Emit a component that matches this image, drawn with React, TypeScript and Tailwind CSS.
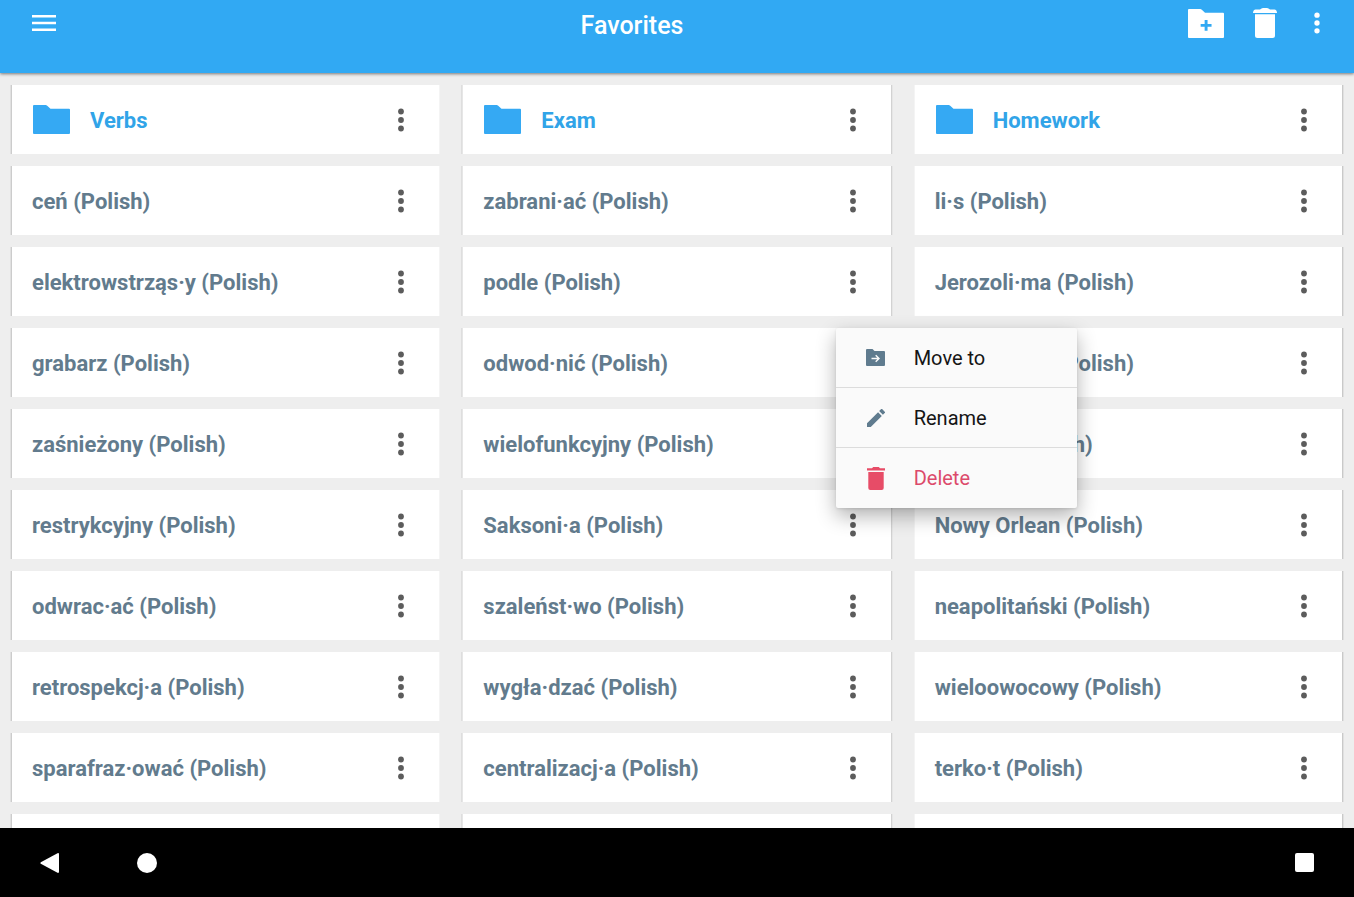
import React from "react";

type Column = { name: string; edge: string; words: string[] };

const columns: Column[] = [
  {
    name: "Verbs",
    edge: "shadow-[-1px_0_0_#cccccc,-2px_0_0_#e0e0e0,1px_0_0_#f4f4f4]",
    words: ["ceń", "elektrowstrząs·y", "grabarz", "zaśnieżony", "restrykcyjny", "odwrac·ać", "retrospekcj·a", "sparafraz·ować"],
  },
  {
    name: "Exam",
    edge: "shadow-[-1px_0_0_#e6e6e6,-2px_0_0_#dedede,1px_0_0_#d2d2d2,2px_0_0_#e6e6e6]",
    words: ["zabrani·ać", "podle", "odwod·nić", "wielofunkcyjny", "Saksoni·a", "szaleńst·wo", "wygła·dzać", "centralizacj·a"],
  },
  {
    name: "Homework",
    edge: "shadow-[-1px_0_0_#f4f4f4,1px_0_0_#c9c9c9,2px_0_0_#e0e0e0]",
    words: ["li·s", "Jerozoli·ma", "Jerozoli·ma", "grabarz", "Nowy Orlean", "neapolitański", "wieloowocowy", "terko·t"],
  },
];

const OPEN_MENU_WORD = "odwod·nić";

function FolderIcon() {
  return (
    <svg width="37" height="29" viewBox="0 0 37 30" preserveAspectRatio="none" fill="currentColor" aria-hidden="true">
      <path d="M1 0H12.500Q13.500 0 14.200 0.700L17.500 4H36Q37 4 37 5V29Q37 30 36 30H1Q0 30 0 29V1Q0 0 1 0Z" />
    </svg>
  );
}

function AddFolderIcon() {
  return (
    <svg width="36" height="29" viewBox="0 0 37 30" preserveAspectRatio="none" fill="currentColor" aria-hidden="true">
      <path
        fillRule="evenodd"
        d="M1 0H12.500Q13.500 0 14.200 0.700L17.500 4H36Q37 4 37 5V29Q37 30 36 30H1Q0 30 0 29V1Q0 0 1 0ZM17.100 11.500V15.600H13V18.400H17.100V22.500H20.100V18.400H24.200V15.600H20.100V11.500Z"
      />
    </svg>
  );
}

function TrashIcon() {
  return (
    <svg width="24" height="30" viewBox="0 0 24 30" fill="currentColor" aria-hidden="true">
      <path d="M7 1.500Q8.500 0 10 0H14Q15.500 0 17 1.500H21.500Q23.500 1.500 24 4.500Q24 5 23.500 5H0.500Q0 5 0 4.500Q0.500 1.500 2.500 1.500ZM2 6.300H22V27.500Q22 30 19.500 30H4.500Q2 30 2 27.500Z" />
    </svg>
  );
}

function SmallTrashIcon() {
  return (
    <svg width="18" height="23" viewBox="0 0 18 23" fill="currentColor" aria-hidden="true">
      <path d="M0 1.300H5L6.200 0H11.800L13 1.300H18V3.600H0ZM1.300 5H16.700V21Q16.700 23 14.700 23H3.300Q1.300 23 1.300 21Z" />
    </svg>
  );
}

function MoveIcon() {
  return (
    <svg width="19" height="17" viewBox="0 0 19 17" fill="currentColor" aria-hidden="true">
      <path
        fillRule="evenodd"
        d="M1 0H6.500L8.500 2H18Q19 2 19 3V16Q19 17 18 17H1Q0 17 0 16V1Q0 0 1 0ZM5.500 8.700V10.200H11.200L9.200 12.200L10.200 13.200L14 9.450L10.200 5.700L9.200 6.700L11.200 8.700Z"
      />
    </svg>
  );
}

function PencilIcon() {
  return (
    <svg width="18" height="18" viewBox="3 3 18 18" fill="currentColor" aria-hidden="true">
      <path d="M3 17.250V21h3.750L17.810 9.940l-3.750-3.750L3 17.250zM20.710 7.040a1 1 0 0 0 0-1.410l-2.340-2.340a1 1 0 0 0-1.410 0l-1.830 1.830 3.750 3.750 1.830-1.830z" />
    </svg>
  );
}

function Dots({ className }: { className: string }) {
  return (
    <svg className={className} viewBox="0 0 6 24" fill="currentColor" aria-hidden="true">
      <circle cx="3" cy="3.500" r="2.900" />
      <circle cx="3" cy="12" r="2.900" />
      <circle cx="3" cy="20.500" r="2.900" />
    </svg>
  );
}

function PopupMenu() {
  const item = "flex h-[60px] w-full items-center text-left";
  const icon = "flex w-[78px] shrink-0 justify-center pl-0.5";
  return (
    <div
      role="menu"
      className="absolute top-0 left-0 z-10 w-[241px] divide-y divide-[#dcdcdc] rounded-xs bg-[#fafafa] text-xl text-[#151515] shadow-[0_8px_20px_rgba(0,0,0,0.3),0_1px_3px_rgba(0,0,0,0.1)]"
    >
      <button role="menuitem" className={item}>
        <span className={`${icon} text-[#5f7b8e]`}><MoveIcon /></span>
        Move to
      </button>
      <button role="menuitem" className={item}>
        <span className={`${icon} text-[#5f7b8e]`}><PencilIcon /></span>
        Rename
      </button>
      <button role="menuitem" className={`${item} text-[#dc4a6b]`}>
        <span className={`${icon} text-[#e74c67]`}><SmallTrashIcon /></span>
        Delete
      </button>
    </div>
  );
}

function Card({ edge, label, open, children }: { edge: string; label: string; open?: boolean; children: React.ReactNode }) {
  return (
    <li className={`flex h-[69px] shrink-0 items-center justify-between bg-white pr-[21px] pl-5 ${edge}`}>
      {children}
      <div className="relative h-full w-[34px] shrink-0">
        <button aria-label={`Options for ${label}`} className="flex size-full items-center justify-center text-[#5c5c5c]">
          <Dots className="h-6 w-1.5" />
        </button>
        {open && <PopupMenu />}
      </div>
    </li>
  );
}

export default function App() {
  return (
    <div className="flex h-screen flex-col overflow-hidden bg-[#eeeeee] font-[Roboto,sans-serif]">
      <header className="relative z-20 grid h-[73px] shrink-0 grid-cols-[1fr_auto_1fr] items-start bg-[#31a9f3] text-white shadow-[0_1px_3px_rgba(0,0,0,0.5)]">
        <button aria-label="Open navigation" className="ml-8 flex h-[46px] w-6 items-center">
          <svg width="24" height="16" viewBox="0 0 24 16" fill="currentColor" aria-hidden="true">
            <path d="M0 0H24V2.500H0ZM0 6.800H24V9.300H0ZM0 13.500H24V16H0Z" />
          </svg>
        </button>
        <h1 className="mr-[90px] text-[25px] leading-[51px] font-medium">Favorites</h1>
        <div className="flex h-[46px] items-center justify-end pr-[34px]">
          <button aria-label="New folder"><AddFolderIcon /></button>
          <button aria-label="Delete" className="ml-[29px]"><TrashIcon /></button>
          <button aria-label="More options" className="ml-[37px]"><Dots className="h-[22px] w-1.5" /></button>
        </div>
      </header>

      <main className="grid min-h-0 flex-1 grid-cols-3 gap-6 overflow-hidden px-3 pt-3">
        {columns.map((column) => (
          <ul key={column.name} className="flex min-w-0 flex-col gap-3">
            <Card edge={column.edge} label={column.name}>
              <a href="#folder" className="flex items-center gap-5 pl-px text-[22px] font-bold text-[#31a4e8]">
                <span className="text-[#35a9f3]"><FolderIcon /></span>
                <span className="pt-0.5">{column.name}</span>
              </a>
            </Card>
            {column.words.map((word, i) => (
              <Card key={i} edge={column.edge} label={word} open={word === OPEN_MENU_WORD}>
                <a href="#word" className="pt-0.5 text-[22px] font-bold whitespace-nowrap text-[#627b8d]">
                  {word} (Polish)
                </a>
              </Card>
            ))}
            <li aria-hidden="true" className={`h-[69px] shrink-0 bg-white ${column.edge}`} />
          </ul>
        ))}
      </main>

      <nav aria-label="System" className="relative z-20 flex h-[69px] shrink-0 items-center bg-black px-10 text-white">
        <button aria-label="Back">
          <svg width="19" height="20" viewBox="0 0 19 20" fill="currentColor" aria-hidden="true">
            <path d="M17.500 0.200Q19 -0.300 19 1.200V18.800Q19 20.300 17.500 19.800L0.800 10.800Q0 10 0.800 9.200Z" />
          </svg>
        </button>
        <button aria-label="Home" className="ml-[78px] size-5 rounded-full bg-white" />
        <button aria-label="Recent apps" className="ml-auto size-[19px] rounded-xs bg-white" />
      </nav>
    </div>
  );
}
